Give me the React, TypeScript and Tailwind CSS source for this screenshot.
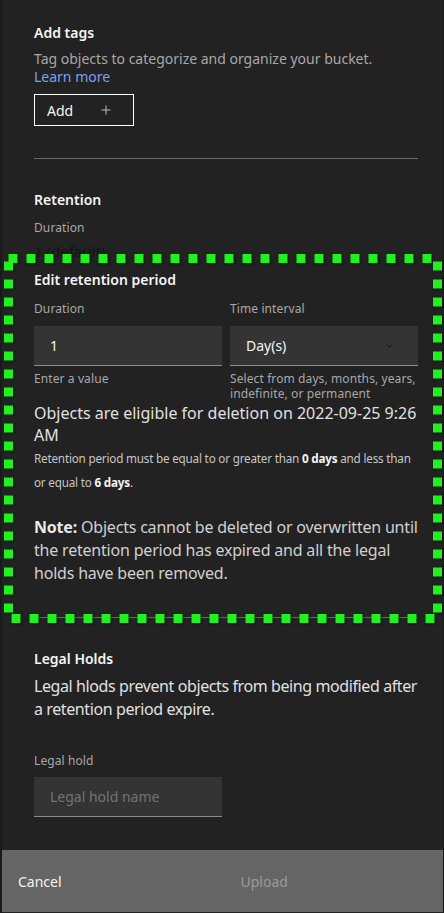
import { ChevronDown, Plus } from "lucide-react";

const font = { fontFamily: "'Noto Sans', Roboto, sans-serif" };

const Label = ({ children }: { children: React.ReactNode }) => (
  <div className="text-[12px] leading-[16px] tracking-[0.1px] text-[#a8a8a8]">{children}</div>
);

const Divider = () => <div className="h-px bg-[#6a6a6a]" />;

export default function App() {
  return (
    <div
      className="relative min-h-[913px] w-full bg-[#222222] border-l-2 border-r border-[#1a1a1a] flex flex-col text-[#f4f4f4]"
      style={font}
    >
      <div className="pl-[32px] pr-[25px] pt-[24px] flex flex-col">
        {/* Add tags */}
        <div className="text-[14px] leading-[18px] font-semibold">Add tags</div>
        <p className="mt-[8px] text-[14px] leading-[18px] text-[#a8a8a8]">
          Tag objects to categorize and organize your bucket.
          <br />
          <a className="text-[#7aa0f0]">Learn more</a>
        </p>
        <button className="mt-[8px] w-[100px] h-[32px] border border-white flex items-center justify-between pl-[12px] pr-[20px] text-[14px]">
          <span>Add</span>
          <Plus size={14} strokeWidth={1.6} className="text-[#c6c6c6]" />
        </button>
        <div className="mt-[32px]">
          <Divider />
        </div>

        {/* Retention */}
        <div className="mt-[32px] text-[14px] leading-[18px] font-semibold">Retention</div>
        <div className="mt-[11px]">
          <Label>Duration</Label>
        </div>
        <div className="mt-[6px] text-[15px] leading-[18px] text-[#141414]">1 (default)</div>

        {/* Edit retention period */}
        <div className="mt-[11px] text-[14px] leading-[18px] font-semibold">Edit retention period</div>
        <div className="mt-[12px] grid grid-cols-2 gap-[8px]">
          <div className="flex flex-col">
            <Label>Duration</Label>
            <div className="mt-[9px] h-[40px] bg-[#343434] border-b border-[#8d8d8d] flex items-center px-[16px] text-[14px]">
              1
            </div>
            <div className="mt-[5px] text-[12px] leading-[15px] tracking-[0.1px] text-[#a8a8a8]">Enter a value</div>
          </div>
          <div className="flex flex-col">
            <Label>Time interval</Label>
            <div className="mt-[9px] h-[40px] bg-[#343434] border-b border-[#8d8d8d] flex items-center justify-between pl-[16px] pr-[22px] text-[14px]">
              <span>Day(s)</span>
              <ChevronDown size={13} strokeWidth={1.6} className="text-[#161616]" />
            </div>
            <div className="mt-[5px] text-[12px] leading-[15px] tracking-[0.1px] text-[#a8a8a8] whitespace-nowrap">
              Select from days, months, years,
              <br />
              indefinite, or permanent
            </div>
          </div>
        </div>
        <p className="mt-[1px] text-[16px] leading-[22px] text-[#e0e0e0] whitespace-nowrap">
          Objects are eligible for deletion on 2022-09-25 9:26
          <br />
          AM
        </p>
        <p className="text-[11.7px] leading-[24px] tracking-[-0.2px] text-[#c6c6c6] whitespace-nowrap">
          Retention period must be equal to or greater than <b className="text-[#f4f4f4]">0 days</b> and less than
          <br />
          or equal to <b className="text-[#f4f4f4]">6 days</b>.
        </p>
        <p className="mt-[22px] text-[16px] leading-[23px] tracking-[-0.2px] text-[#d0d0d0] whitespace-nowrap">
          <b className="text-[#e8e8e8]">Note:</b> Objects cannot be deleted or overwritten until
          <br />
          the retention period has expired and all the legal
          <br />
          holds have been removed.
        </p>
        <div className="mt-[32px]">
          <Divider />
        </div>

        {/* Legal holds */}
        <div className="mt-[32px] text-[14px] leading-[18px] font-semibold">Legal Holds</div>
        <p className="mt-[7px] text-[16px] leading-[23px] tracking-[-0.4px] text-[#e0e0e0] whitespace-nowrap">
          Legal hlods prevent objects from being modified after
          <br />a retention period expire.
        </p>
        <div className="mt-[32px]">
          <Label>Legal hold</Label>
        </div>
        <div className="mt-[8px] w-[188px] h-[40px] bg-[#343434] border-b border-[#8d8d8d] flex items-center px-[16px] text-[14px] text-[#737373]">
          Legal hold name
        </div>
      </div>

      {/* Footer */}
      <div className="mt-[33px] h-[62px] bg-[#656565] grid grid-cols-2 text-[14px]">
        <button className="text-left pl-[16px] text-[#f4f4f4]">Cancel</button>
        <button className="text-left pl-[18px] text-[#9a9a9a]">Upload</button>
      </div>

      {/* highlight overlay */}
      <svg
        className="absolute left-[-2px] top-0 pointer-events-none"
        width="444"
        height="913"
        style={{ filter: "drop-shadow(1px 1px 1px rgba(0,0,0,0.6))" }}
      >
        <rect
          x="8.5"
          y="258.5"
          width="429"
          height="360"
          fill="none"
          stroke="#1ff21f"
          strokeWidth="9"
          strokeDasharray="9 9"
        />
      </svg>
    </div>
  );
}
